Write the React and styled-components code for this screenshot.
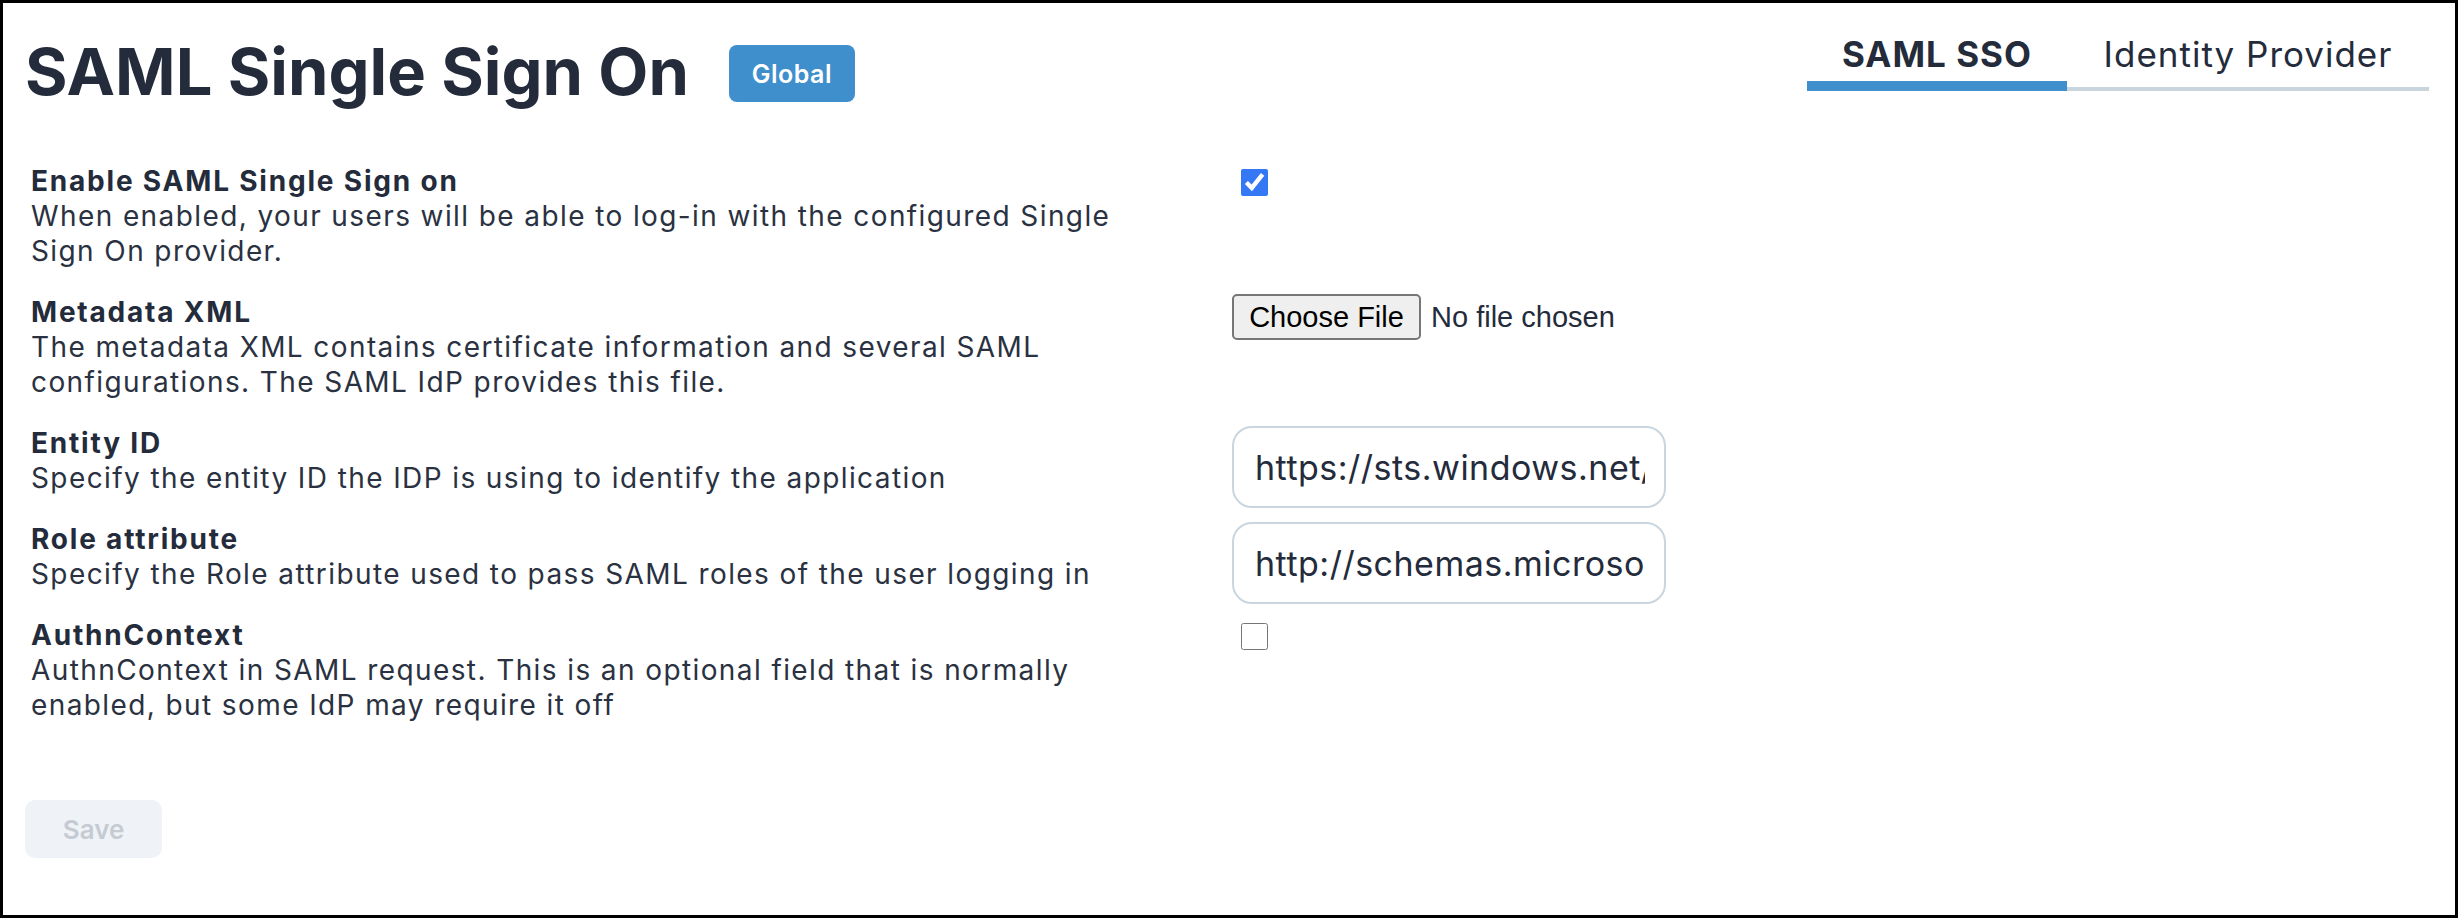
import React from "react";
import styled, { createGlobalStyle } from "styled-components";

const GlobalStyle = createGlobalStyle`
    html, body {
        margin: 0;
        padding: 0;
        background: #fff;
    }
    body {
        font-family: "Inter", "Open Sans", sans-serif;
        color: #242b3b;
    }
    * {
        box-sizing: border-box;
    }
`;

const fields = [
    {
        label: "Enable SAML Single Sign on",
        desc: "When enabled, your users will be able to log-in with the configured Single Sign On provider.",
        type: "checkbox",
        checked: true,
    },
    {
        label: "Metadata XML",
        desc: "The metadata XML contains certificate information and several SAML configurations. The SAML IdP provides this file.",
        type: "file",
    },
    {
        label: "Entity ID",
        desc: "Specify the entity ID the IDP is using to identify the application",
        type: "text",
        value: "https://sts.windows.net/7c1b4e2a-93d0-4f6e-8a15-2b9e0c6d4f31/",
    },
    {
        label: "Role attribute",
        desc: "Specify the Role attribute used to pass SAML roles of the user logging in",
        type: "text",
        value: "http://schemas.microsoft.com/ws/2008/06/identity/claims/role",
    },
    {
        label: "AuthnContext",
        desc: "AuthnContext in SAML request. This is an optional field that is normally enabled, but some IdP may require it off",
        type: "checkbox",
        checked: false,
    },
];

const FieldControl = ({ field }) => {
    if (field.type === "checkbox") {
        return <Checkbox type="checkbox" defaultChecked={field.checked} />;
    }
    if (field.type === "file") {
        return (
            <FilePicker>
                <FileButton type="button">Choose File</FileButton>
                <FileName>No file chosen</FileName>
            </FilePicker>
        );
    }
    return <TextInput type="text" defaultValue={field.value} />;
};

export default function App() {
    return (
        <>
            <GlobalStyle />
            <Frame>
                <Header>
                    <TitleGroup>
                        <Title>SAML Single Sign On</Title>
                        <Badge>Global</Badge>
                    </TitleGroup>
                    <TabList>
                        <Tab $active $width={260}>SAML SSO</Tab>
                        <Tab $width={362}>Identity Provider</Tab>
                    </TabList>
                </Header>
                <Form>
                    {fields.map((field) => (
                        <FieldRow key={field.label}>
                            <FieldText>
                                <FieldLabel>{field.label}</FieldLabel>
                                <FieldDesc>{field.desc}</FieldDesc>
                            </FieldText>
                            <FieldControl field={field} />
                        </FieldRow>
                    ))}
                </Form>
                <SaveButton type="button" disabled>
                    Save
                </SaveButton>
            </Frame>
        </>
    );
}

const Frame = styled.div`
    width: 2458px;
    height: 918px;
    border: 3px solid #000;
    background: #fff;
    padding: 0 26px 0 22px;
    display: flex;
    flex-direction: column;
    align-items: stretch;
`;

const Header = styled.div`
    display: flex;
    justify-content: space-between;
    align-items: flex-start;
    padding-top: 29px;
`;

const TitleGroup = styled.div`
    display: flex;
    align-items: center;
    gap: 40px;
    height: 80px;
`;

const Title = styled.h1`
    margin: 0;
    font-size: 65px;
    line-height: 80px;
    font-weight: 700;
    color: #242b3b;
`;

const Badge = styled.span`
    display: inline-flex;
    align-items: center;
    justify-content: center;
    width: 126px;
    height: 57px;
    margin-top: 3px;
    border-radius: 8px;
    background: #3f8fcd;
    color: #fff;
    font-size: 25px;
    font-weight: 600;
    letter-spacing: 0.5px;
`;

const TabList = styled.div`
    display: flex;
    align-items: flex-end;
    margin-top: 2px;
`;

const Tab = styled.div`
    width: ${(p) => p.$width}px;
    text-align: center;
    font-size: 35px;
    line-height: 40px;
    letter-spacing: 1px;
    font-weight: ${(p) => (p.$active ? 700 : 400)};
    color: #242b3b;
    padding-bottom: ${(p) => (p.$active ? 7 : 13)}px;
    border-bottom: ${(p) => (p.$active ? "10px solid #3f8fcd" : "4px solid #c8d5dd")};
    cursor: pointer;
`;

const Form = styled.div`
    display: flex;
    flex-direction: column;
    gap: 14px;
    margin-top: 52px;
    padding-left: 6px;
`;

const FieldRow = styled.div`
    display: grid;
    grid-template-columns: 1130px 1fr;
    column-gap: 71px;
    align-items: start;
`;

const FieldText = styled.div`
    display: flex;
    flex-direction: column;
    padding-bottom: 12px;
`;

const FieldLabel = styled.div`
    font-size: 28px;
    line-height: 35px;
    font-weight: 700;
    letter-spacing: 1.8px;
    color: #242b3b;
`;

const FieldDesc = styled.div`
    font-size: 28px;
    line-height: 35px;
    font-weight: 400;
    letter-spacing: 1.4px;
    color: #2a3141;
`;

const Checkbox = styled.input`
    width: 27px;
    height: 27px;
    margin: 5px 0 0 9px;
    accent-color: #3478f6;
`;

const FilePicker = styled.div`
    display: flex;
    align-items: center;
    gap: 10px;
    margin-top: -1px;
`;

const FileButton = styled.button`
    width: 189px;
    height: 46px;
    padding: 0;
    border: 2px solid #767676;
    border-radius: 5px;
    background: #efefef;
    font-family: "Liberation Sans", Arial, sans-serif;
    font-size: 29px;
    color: #000;
`;

const FileName = styled.span`
    font-family: "Liberation Sans", Arial, sans-serif;
    font-size: 29px;
    color: #242b3b;
`;

const TextInput = styled.input`
    width: 434px;
    height: 82px;
    padding: 0 19px 0 21px;
    border: 2px solid #c9d6df;
    border-radius: 20px;
    font-family: "Inter", sans-serif;
    font-size: 34px;
    letter-spacing: 0.5px;
    color: #242b3b;
    background: #fff;
    outline: none;
`;

const SaveButton = styled.button`
    align-self: flex-start;
    margin-top: 65px;
    width: 137px;
    height: 58px;
    border: none;
    border-radius: 10px;
    background: #eff3f7;
    color: #c5cad3;
    font-family: "Inter", sans-serif;
    font-size: 26px;
    font-weight: 600;
`;
